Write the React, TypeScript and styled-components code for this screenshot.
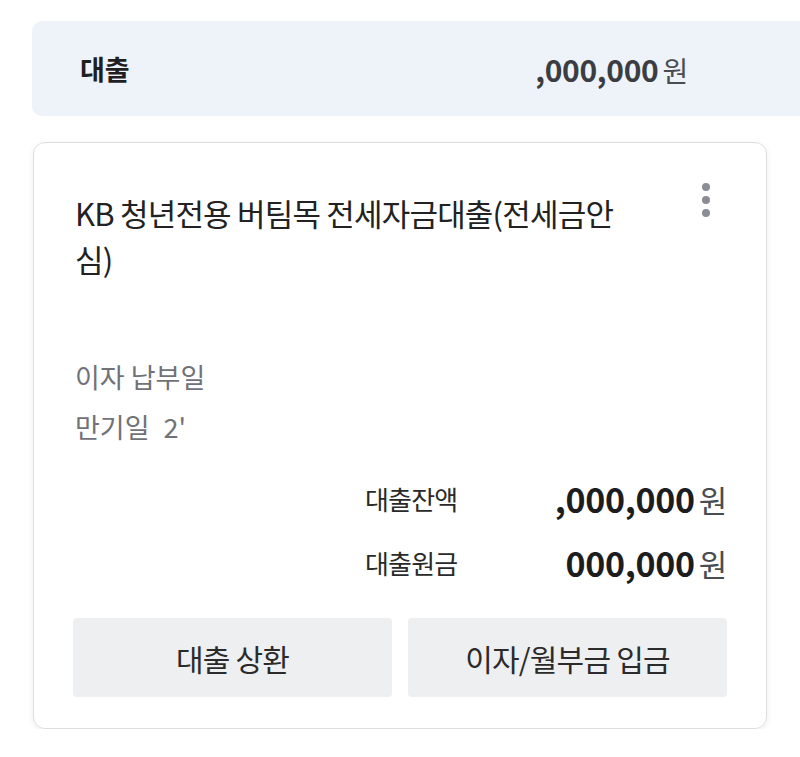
import styled, { createGlobalStyle } from "styled-components";

const GlobalStyle = createGlobalStyle`
  body {
    margin: 0;
    background: #ffffff;
    font-family: "Noto Sans CJK KR", "Noto Sans", sans-serif;
    color: #222;
  }
`;

const Page = styled.div`
  padding: 21px 0 0 32px;
  display: flex;
  flex-direction: column;
  gap: 26px;
`;

const SummaryBar = styled.div`
  height: 95px;
  background: #eef3fa;
  border-radius: 10px 0 0 10px;
  display: flex;
  align-items: center;
  justify-content: space-between;
  padding: 0 112px 0 48px;
`;

const SummaryTitle = styled.span`
  font-size: 27px;
  font-weight: 700;
  color: #1f1f1f;
`;

const SummaryAmount = styled.span`
  font-size: 30px;
  font-weight: 600;
  color: #3b3d42;
  letter-spacing: -0.3px;
`;

const Unit = styled.span<{ $size: number }>`
  font-size: ${(p) => p.$size}px;
  font-weight: 400;
  color: #4a4c50;
  margin-left: 4px;
`;

const Card = styled.div`
  width: 734px;
  margin-left: 1px;
  box-sizing: border-box;
  border: 1px solid #dcdde0;
  border-radius: 12px;
  box-shadow: 0 2px 6px rgba(0, 0, 0, 0.07);
  padding: 47px 39px 31px 39px;
  display: flex;
  flex-direction: column;
`;

const Header = styled.div`
  display: flex;
  justify-content: space-between;
  align-items: flex-start;
`;

const Title = styled.h2`
  margin: 0;
  width: 560px;
  font-size: 31px;
  font-weight: 400;
  line-height: 46px;
  color: #222;
  letter-spacing: -0.8px;
  word-break: break-all;
  padding-left: 2px;
`;

const Kebab = styled.button`
  border: 0;
  background: none;
  padding: 0;
  margin: -7px 17px 0 0;
  display: flex;
  flex-direction: column;
  gap: 5px;
  cursor: pointer;
`;

const Dot = styled.span`
  width: 8px;
  height: 8px;
  border-radius: 50%;
  background: #8a8d93;
`;

const InfoList = styled.div`
  margin-top: 70px;
  display: flex;
  flex-direction: column;
`;

const InfoLine = styled.div`
  font-size: 27px;
  line-height: 50px;
  color: #707277;
  padding-left: 2px;
  display: flex;
  gap: 14px;
`;

const Amounts = styled.div`
  margin-top: 14px;
  margin-left: auto;
  width: 362px;
  display: flex;
  flex-direction: column;
`;

const AmountRow = styled.div`
  display: flex;
  justify-content: space-between;
  align-items: center;
  height: 64px;
`;

const AmountLabel = styled.span`
  font-size: 26px;
  color: #2a2a2a;
  letter-spacing: -0.8px;
`;

const AmountValue = styled.span`
  font-size: 34px;
  font-weight: 700;
  color: #1d1d1f;
  letter-spacing: -0.3px;
`;

const Buttons = styled.div`
  margin-top: 24px;
  display: grid;
  grid-template-columns: 1fr 1fr;
  gap: 16px;
`;

const ActionButton = styled.button`
  height: 79px;
  border: 0;
  border-radius: 4px;
  background: #eeeff1;
  font-family: inherit;
  font-size: 30px;
  color: #2b2b2b;
  letter-spacing: -0.8px;
  cursor: pointer;
`;

const App = () => {
  return (
    <Page>
      <GlobalStyle />
      <SummaryBar>
        <SummaryTitle>대출</SummaryTitle>
        <SummaryAmount>
          ,000,000<Unit $size={28}>원</Unit>
        </SummaryAmount>
      </SummaryBar>

      <Card>
        <Header>
          <Title>KB 청년전용 버팀목 전세자금대출(전세금안심)</Title>
          <Kebab aria-label="더보기">
            <Dot />
            <Dot />
            <Dot />
          </Kebab>
        </Header>

        <InfoList>
          <InfoLine>이자 납부일</InfoLine>
          <InfoLine>
            <span>만기일</span>
            <span>2'</span>
          </InfoLine>
        </InfoList>

        <Amounts>
          <AmountRow>
            <AmountLabel>대출잔액</AmountLabel>
            <AmountValue>
              ,000,000<Unit $size={31}>원</Unit>
            </AmountValue>
          </AmountRow>
          <AmountRow>
            <AmountLabel>대출원금</AmountLabel>
            <AmountValue>
              000,000<Unit $size={31}>원</Unit>
            </AmountValue>
          </AmountRow>
        </Amounts>

        <Buttons>
          <ActionButton>대출 상환</ActionButton>
          <ActionButton>이자/월부금 입금</ActionButton>
        </Buttons>
      </Card>
    </Page>
  );
};

export default App;
